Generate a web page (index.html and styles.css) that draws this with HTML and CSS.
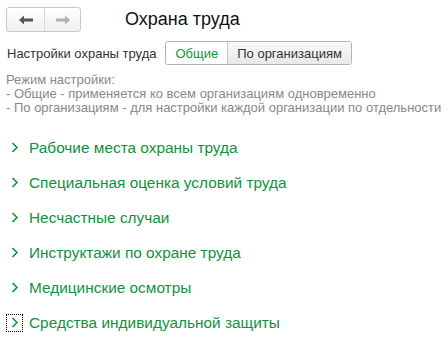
FILE: index.html
```html
<!DOCTYPE HTML>
<html>
<head>
  <meta charset="utf-8">
  <title>Охрана труда</title>
  <link rel="stylesheet" href="styles.css">
</head>
<body>
<header class="head">
  <div class="nav">
    <span class="nav-btn">
      <svg width="14" height="10" viewBox="0 0 14 10"><path d="M0 5 L5 0.5 L5 3.5 L14 3.5 L14 6.5 L5 6.5 L5 9.5 Z" fill="#555"/></svg>
    </span>
    <span class="nav-btn">
      <svg width="14" height="10" viewBox="0 0 14 10"><path d="M14 5 L9 0.5 L9 3.5 L0 3.5 L0 6.5 L9 6.5 L9 9.5 Z" fill="#b0b0b0"/></svg>
    </span>
  </div>
  <h1 class="title">Охрана труда</h1>
</header>
<section class="settings">
  <span class="settings-label">Настройки охраны труда</span>
  <div class="switch">
    <span class="switch-item active">Общие</span>
    <span class="switch-item">По организациям</span>
  </div>
</section>
<p class="hint">Режим настройки:<br>- Общие - применяется ко всем организациям одновременно<br>- По организациям - для настройки каждой организации по отдельности</p>
<ul class="groups">
  <li class="group"><span class="chev"><svg width="8" height="11" viewBox="0 0 8 11"><path d="M1.5 1 L6 5.5 L1.5 10" fill="none" stroke="#11923c" stroke-width="1.6"/></svg></span>Рабочие места охраны труда</li>
  <li class="group"><span class="chev"><svg width="8" height="11" viewBox="0 0 8 11"><path d="M1.5 1 L6 5.5 L1.5 10" fill="none" stroke="#11923c" stroke-width="1.6"/></svg></span>Специальная оценка условий труда</li>
  <li class="group"><span class="chev"><svg width="8" height="11" viewBox="0 0 8 11"><path d="M1.5 1 L6 5.5 L1.5 10" fill="none" stroke="#11923c" stroke-width="1.6"/></svg></span>Несчастные случаи</li>
  <li class="group"><span class="chev"><svg width="8" height="11" viewBox="0 0 8 11"><path d="M1.5 1 L6 5.5 L1.5 10" fill="none" stroke="#11923c" stroke-width="1.6"/></svg></span>Инструктажи по охране труда</li>
  <li class="group"><span class="chev"><svg width="8" height="11" viewBox="0 0 8 11"><path d="M1.5 1 L6 5.5 L1.5 10" fill="none" stroke="#11923c" stroke-width="1.6"/></svg></span>Медицинские осмотры</li>
  <li class="group"><span class="chev focus"><svg width="8" height="11" viewBox="0 0 8 11"><path d="M1.5 1 L6 5.5 L1.5 10" fill="none" stroke="#11923c" stroke-width="1.6"/></svg></span>Средства индивидуальной защиты</li>
</ul>
</body>
</html>
```

FILE: styles.css
```css
/*base*/
body{
	margin:0;
	padding:0;
	font-family:"Liberation Sans",Arial,sans-serif;
	color:#333;
	background:#fff;
}

/*1.header*/
.head{
	display:flex;
	align-items:center;
	padding:7px 0 0 6px;
}
.nav{
	display:flex;
	height:23px;
	border:1px solid #c8c8c8;
	border-radius:3px;
	background:linear-gradient(#fff,#efefef);
}
.nav-btn{
	display:flex;
	align-items:center;
	justify-content:center;
	width:37px;
}
.nav-btn+.nav-btn{
	border-left:1px solid #d8d8d8;
	width:35px;
}
.title{
	margin:0 0 0 44px;
	font-size:18px;
	font-weight:normal;
	color:#111;
}

/*2.settings*/
.settings{
	display:flex;
	align-items:center;
	padding:9px 0 0 7px;
}
.settings-label{
	font-size:13px;
	color:#333;
	margin-right:9px;
}
.switch{
	display:flex;
	height:22px;
	border:1px solid #b4b4b4;
	border-radius:3px;
	overflow:hidden;
	font-size:13px;
}
.switch-item{
	display:flex;
	align-items:center;
	padding:0 9px;
	background:linear-gradient(#fafafa,#e8e8e8);
	color:#333;
}
.switch-item.active{
	background:#fff;
	color:#11923c;
	border-right:1px solid #c8c8c8;
}

/*3.hint*/
.hint{
	margin:8px 0 0 6px;
	font-size:13px;
	line-height:14px;
	color:#888;
	white-space:nowrap;
}

/*4.groups*/
.groups{
	list-style:none;
	margin:15px 0 0;
	padding:0;
}
.group{
	display:flex;
	align-items:center;
	height:35px;
	padding-left:6px;
	font-size:15.4px;
	color:#11923c;
}
.chev{
	display:flex;
	align-items:center;
	justify-content:center;
	width:15px;
	height:16px;
	margin-right:6px;
	border:1px dotted transparent;
}
.chev.focus{
	border-color:#000;
}
```
